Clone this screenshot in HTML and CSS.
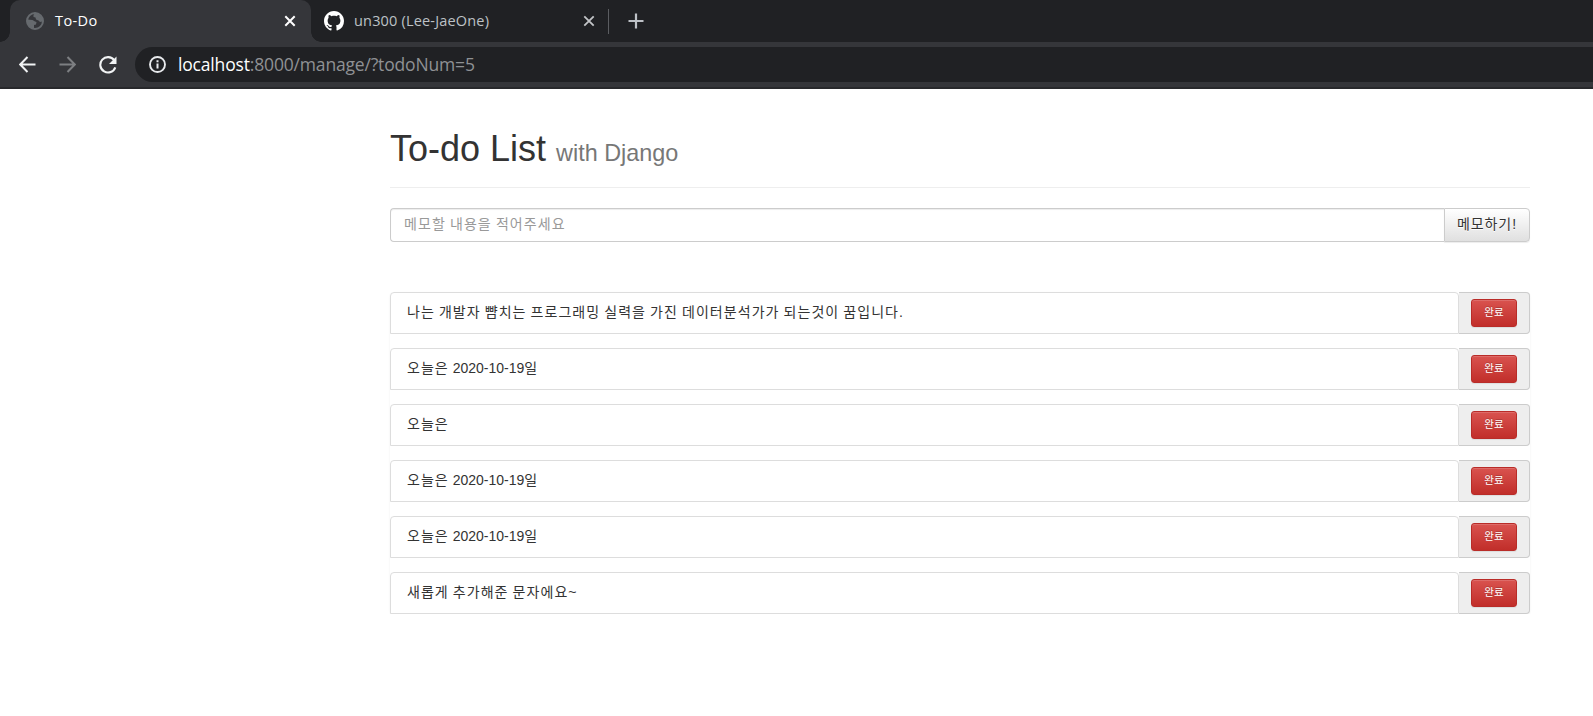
FILE: index.html
```html
<!DOCTYPE html>
<html lang="ko">
<head>
<meta charset="utf-8">
<title>To-Do</title>
<link rel="stylesheet" href="styles.css">
</head>
<body>
<header class="browser">
  <div class="tabs">
    <div class="tab tab-active">
      <svg class="globe" width="18" height="18" viewBox="0 0 18 18"><circle cx="9" cy="9" r="8" fill="none" stroke="#666a6e" stroke-width="2"/><path d="M1 7.500 6.500 8 9 9.500 10.500 10 10 12.500 8 13 8 17 4 15.500 1 11ZM9 1 7.500 3 7.500 5 9.500 5.500 10 7.500 12.500 8.500 14 10 16.500 9.500 16.500 6 13 2.500Z" fill="#666a6e"/></svg>
      <span class="tab-title title-active">To-Do</span>
      <svg class="close" width="12" height="12" viewBox="0 0 12 12"><path d="M1.300 1.300 10.700 10.700M10.700 1.300 1.300 10.700" stroke="#fff" stroke-width="2"/></svg>
    </div>
    <div class="tab tab-idle">
      <svg class="octocat" width="20" height="20" viewBox="0 0 16 16"><path fill="#fff" d="M8 0C3.580 0 0 3.580 0 8c0 3.540 2.290 6.530 5.470 7.590.4.070.55-.17.55-.38 0-.19-.01-.82-.01-1.490-2.010.37-2.530-.49-2.690-.94-.09-.23-.48-.94-.82-1.130-.28-.15-.68-.52-.01-.53.63-.01 1.080.58 1.230.82.72 1.210 1.870.87 2.330.66.070-.52.28-.87.51-1.070-1.780-.2-3.640-.89-3.640-3.950 0-.87.31-1.590.82-2.150-.08-.2-.36-1.020.08-2.120 0 0 .67-.21 2.200.82.64-.18 1.320-.27 2-.27s1.360.09 2 .27c1.530-1.040 2.200-.82 2.200-.82.44 1.100.16 1.920.08 2.120.51.56.82 1.270.82 2.150 0 3.070-1.870 3.750-3.650 3.950.29.25.54.73.54 1.480 0 1.070-.01 1.930-.01 2.200 0 .21.15.46.55.38A8.010 8.010 0 0 0 16 8c0-4.420-3.580-8-8-8Z"/></svg>
      <span class="tab-title title-idle">un300 (Lee-JaeOne)</span>
      <svg class="close" width="12" height="12" viewBox="0 0 12 12"><path d="M1.300 1.300 10.700 10.700M10.700 1.300 1.300 10.700" stroke="#c3c5c8" stroke-width="1.800"/></svg>
    </div>
    <span class="divider"></span>
    <svg class="plus" width="16" height="16" viewBox="0 0 16 16"><path d="M8 .5v15M.5 8h15" stroke="#bdc1c6" stroke-width="2.200"/></svg>
  </div>
  <div class="toolbar">
    <svg class="nav" width="17" height="17" viewBox="0 0 17 17"><path d="M16.500 8.500H1.500M8.500 1 1.200 8.500 8.500 16" fill="none" stroke="#f1f3f4" stroke-width="2"/></svg>
    <svg class="nav" width="17" height="17" viewBox="0 0 17 17"><path d="M.5 8.500h15M8.500 1l7.300 7.500L8.500 16" fill="none" stroke="#7d7f82" stroke-width="2"/></svg>
    <svg class="nav reload" width="18" height="18" viewBox="0 0 18 18"><path d="M15.200 4.200A7.700 7.700 0 1 0 16.300 11.300" fill="none" stroke="#f1f3f4" stroke-width="2.100"/><path d="M17.500.5V8H10Z" fill="#f1f3f4"/></svg>
    <div class="omnibox">
      <svg class="info" width="17" height="17" viewBox="0 0 17 17"><circle cx="8.500" cy="8.500" r="7.500" fill="none" stroke="#e8eaed" stroke-width="1.900"/><path d="M8.500 7.500v5M8.500 4.200v2" stroke="#e8eaed" stroke-width="2"/></svg>
      <span class="url"><span class="host">localhost</span><span class="path">:8000/manage/?todoNum=5</span></span>
    </div>
  </div>
</header>
<main class="container">
  <div class="page-header"><h1>To-do List <small>with Django</small></h1></div>
  <form class="input-group">
    <input class="field" type="text" placeholder="메모할 내용을 적어주세요">
    <button class="memo" type="button">메모하기!</button>
  </form>
  <div class="list">
    <div class="row"><div class="item"><span class="ko">나는 개발자 뺨치는 프로그래밍 실력을 가진 데이터분석가가 되는것이 꿈입니다.</span></div><div class="addon"><button class="done" type="button">완료</button></div></div>
    <div class="row"><div class="item"><span class="ko">오늘은</span> 2020-10-19<span class="ko">일</span></div><div class="addon"><button class="done" type="button">완료</button></div></div>
    <div class="row"><div class="item"><span class="ko">오늘은</span></div><div class="addon"><button class="done" type="button">완료</button></div></div>
    <div class="row"><div class="item"><span class="ko">오늘은</span> 2020-10-19<span class="ko">일</span></div><div class="addon"><button class="done" type="button">완료</button></div></div>
    <div class="row"><div class="item"><span class="ko">오늘은</span> 2020-10-19<span class="ko">일</span></div><div class="addon"><button class="done" type="button">완료</button></div></div>
    <div class="row"><div class="item"><span class="ko">새롭게 추가해준 문자에요~</span></div><div class="addon"><button class="done" type="button">완료</button></div></div>
  </div>
</main>
</body>
</html>
```
FILE: styles.css
```css
* { box-sizing: border-box; }
body {
  margin: 0;
  background: #fff;
  color: #333;
  font: 14px/20px "Liberation Sans", "Noto Sans CJK KR", sans-serif;
  overflow: hidden;
}
svg { display: block; flex: none; }

.browser { height: 89px; background: #35363a; border-bottom: 2px solid #28292c; font-family: "Open Sans", "Noto Sans", sans-serif; }
.tabs { display: flex; align-items: center; height: 42px; padding-left: 10px; background: #202124; }
.tab { display: flex; align-items: center; height: 42px; white-space: nowrap; }
.tab-active { position: relative; width: 301px; padding: 0 15px 0 16px; background: #35363a; border-radius: 10px 10px 0 0; color: #fff; }
.tab-active::before, .tab-active::after { content: ""; position: absolute; bottom: 0; width: 10px; height: 10px; }
.tab-active::before { left: -10px; background: radial-gradient(circle at 0 0, transparent 9.500px, #35363a 10px); }
.tab-active::after { right: -10px; background: radial-gradient(circle at 100% 0, transparent 9.500px, #35363a 10px); }
.tab-idle { width: 297px; padding: 0 13px; color: #bdc1c6; }
.tab-title { font-size: 14.500px; line-height: 20px; letter-spacing: .18px; }
.title-active { margin-left: 11px; letter-spacing: .4px; }
.title-idle { margin-left: 10px; }
.close { margin-left: auto; }
.divider { width: 1px; height: 25px; background: #5b5d61; }
.plus { margin-left: 19px; }
.toolbar { display: flex; align-items: center; height: 45px; padding-left: 19px; }
.nav { margin-right: 23px; }
.reload { margin-right: 18px; }
.omnibox { display: flex; align-items: center; flex: 1; height: 35px; padding-left: 14px; border-radius: 18px 0 0 18px; background: #202124; }
.url { margin-left: 12px; padding-bottom: 2px; font-size: 17.500px; letter-spacing: -.17px; line-height: 24px; white-space: nowrap; }
.host { color: #fff; }
.path { color: #8f9194; }

.container { width: 1140px; margin-left: 390px; }
.page-header { margin: 40px 0 20px; padding-bottom: 9px; height: 59px; border-bottom: 1px solid #eee; }
h1 { margin: 0; font-size: 36px; font-weight: 400; line-height: 39.600px; color: #333; }
h1 small { font-size: 23.400px; line-height: 1; color: #777; }

.input-group { display: flex; height: 34px; margin: 0; }
.field {
  flex: 1; min-width: 0; height: 34px; padding: 5px 12px 7px 13px;
  border: 1px solid #ccc; border-right: 0; border-radius: 4px 0 0 4px;
  box-shadow: inset 0 1px 1px rgba(0,0,0,.075);
  font: inherit; letter-spacing: 1.080px; word-spacing: -.9px; color: #555; background: #fff;
}
.field::placeholder { color: #999; opacity: 1; }
.memo {
  width: 86px; height: 34px; padding: 0 0 2px; border: 1px solid #ccc; border-radius: 0 4px 4px 0;
  background: linear-gradient(#fff, #e0e0e0);
  box-shadow: inset 0 1px 0 rgba(255,255,255,.15), 0 1px 1px rgba(0,0,0,.075);
  text-shadow: 0 1px 0 #fff; font: inherit; letter-spacing: .9px; color: #333;
}

.list { display: flex; flex-direction: column; gap: 14px; margin-top: 50px; border-radius: 4px; box-shadow: 0 1px 2px rgba(0,0,0,.075); }
.row { display: flex; height: 42px; }
.item { flex: 1; padding: 10px 15px 10px 16px; border: 1px solid #ddd; border-radius: 4px 4px 0 0; background: #fff; line-height: 19px; }
.ko { letter-spacing: 1.050px; word-spacing: -.9px; }
.addon { display: flex; align-items: center; justify-content: center; width: 71px; border: 1px solid #ccc; border-left: 0; border-radius: 0 4px 4px 0; background: #eee; }
.done {
  width: 46px; height: 28px; padding: 0 0 2px; border: 1px solid #b92c28; border-radius: 3px;
  background: linear-gradient(#d9534f, #c12e2a);
  box-shadow: inset 0 1px 0 rgba(255,255,255,.15), 0 1px 1px rgba(0,0,0,.075);
  text-shadow: 0 -1px 0 rgba(0,0,0,.2);
  font: 10.500px/18px "Liberation Sans", "Noto Sans CJK KR", sans-serif; color: #fff;
}
```
